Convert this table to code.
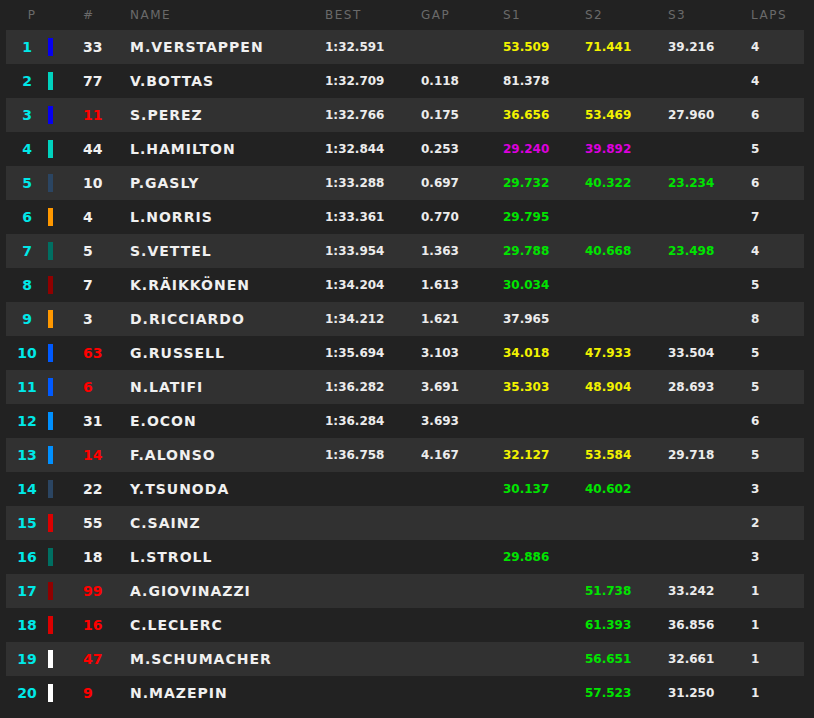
import React from 'react'

type Tone = 'w' | 'y' | 'g' | 'm'

interface Row {
    no: string
    red?: boolean
    name: string
    team: string
    best?: string
    gap?: string
    s1?: [string, Tone]
    s2?: [string, Tone]
    s3?: [string, Tone]
    laps: string
}

const tones: Record<Tone, string> = {
    w: 'text-[#ececec]',
    y: 'text-[#f2f200]',
    g: 'text-[#00e400]',
    m: 'text-[#dc00dc]',
}

const rows: Row[] = [
    { no: '33', name: 'M.VERSTAPPEN', team: 'bg-[#0600ef]', best: '1:32.591', s1: ['53.509', 'y'], s2: ['71.441', 'y'], s3: ['39.216', 'w'], laps: '4' },
    { no: '77', name: 'V.BOTTAS', team: 'bg-[#00d2be]', best: '1:32.709', gap: '0.118', s1: ['81.378', 'w'], laps: '4' },
    { no: '11', red: true, name: 'S.PEREZ', team: 'bg-[#0600ef]', best: '1:32.766', gap: '0.175', s1: ['36.656', 'y'], s2: ['53.469', 'y'], s3: ['27.960', 'w'], laps: '6' },
    { no: '44', name: 'L.HAMILTON', team: 'bg-[#00d2be]', best: '1:32.844', gap: '0.253', s1: ['29.240', 'm'], s2: ['39.892', 'm'], laps: '5' },
    { no: '10', name: 'P.GASLY', team: 'bg-[#2b4562]', best: '1:33.288', gap: '0.697', s1: ['29.732', 'g'], s2: ['40.322', 'g'], s3: ['23.234', 'g'], laps: '6' },
    { no: '4', name: 'L.NORRIS', team: 'bg-[#ff9800]', best: '1:33.361', gap: '0.770', s1: ['29.795', 'g'], laps: '7' },
    { no: '5', name: 'S.VETTEL', team: 'bg-[#006f62]', best: '1:33.954', gap: '1.363', s1: ['29.788', 'g'], s2: ['40.668', 'g'], s3: ['23.498', 'g'], laps: '4' },
    { no: '7', name: 'K.RÄIKKÖNEN', team: 'bg-[#900000]', best: '1:34.204', gap: '1.613', s1: ['30.034', 'g'], laps: '5' },
    { no: '3', name: 'D.RICCIARDO', team: 'bg-[#ff9800]', best: '1:34.212', gap: '1.621', s1: ['37.965', 'w'], laps: '8' },
    { no: '63', red: true, name: 'G.RUSSELL', team: 'bg-[#005aff]', best: '1:35.694', gap: '3.103', s1: ['34.018', 'y'], s2: ['47.933', 'y'], s3: ['33.504', 'w'], laps: '5' },
    { no: '6', red: true, name: 'N.LATIFI', team: 'bg-[#005aff]', best: '1:36.282', gap: '3.691', s1: ['35.303', 'y'], s2: ['48.904', 'y'], s3: ['28.693', 'w'], laps: '5' },
    { no: '31', name: 'E.OCON', team: 'bg-[#0090ff]', best: '1:36.284', gap: '3.693', laps: '6' },
    { no: '14', red: true, name: 'F.ALONSO', team: 'bg-[#0090ff]', best: '1:36.758', gap: '4.167', s1: ['32.127', 'y'], s2: ['53.584', 'y'], s3: ['29.718', 'w'], laps: '5' },
    { no: '22', name: 'Y.TSUNODA', team: 'bg-[#2b4562]', s1: ['30.137', 'g'], s2: ['40.602', 'g'], laps: '3' },
    { no: '55', name: 'C.SAINZ', team: 'bg-[#dc0000]', laps: '2' },
    { no: '18', name: 'L.STROLL', team: 'bg-[#006f62]', s1: ['29.886', 'g'], laps: '3' },
    { no: '99', red: true, name: 'A.GIOVINAZZI', team: 'bg-[#900000]', s2: ['51.738', 'g'], s3: ['33.242', 'w'], laps: '1' },
    { no: '16', red: true, name: 'C.LECLERC', team: 'bg-[#dc0000]', s2: ['61.393', 'g'], s3: ['36.856', 'w'], laps: '1' },
    { no: '47', red: true, name: 'M.SCHUMACHER', team: 'bg-white', s2: ['56.651', 'g'], s3: ['32.661', 'w'], laps: '1' },
    { no: '9', red: true, name: 'N.MAZEPIN', team: 'bg-white', s2: ['57.523', 'g'], s3: ['31.250', 'w'], laps: '1' },
]

const cols = 'grid grid-cols-[42px_35px_47px_195px_96px_82px_82px_83px_83px_1fr] items-center'

const Sector = ({ s }: { s?: [string, Tone] }) => (
    <div className={`text-[12px] font-bold ${s ? tones[s[1]] : ''}`}>{s?.[0]}</div>
)

const App: React.FC = () => {
    return (
        <div className="w-[814px] h-[718px] bg-[#222222] pl-[6px] pr-[10px] font-['DejaVu_Sans',sans-serif] overflow-hidden">
            {/* header */}
            <div className={`${cols} h-[30px] text-[12px] tracking-[1.5px] text-[#6a6a6a]`}>
                <div className="text-center pl-[10px]">P</div>
                <div />
                <div>#</div>
                <div>NAME</div>
                <div>BEST</div>
                <div>GAP</div>
                <div>S1</div>
                <div>S2</div>
                <div>S3</div>
                <div>LAPS</div>
            </div>

            {rows.map((r, i) => (
                <div
                    key={r.name}
                    className={`${cols} h-[34px] ${i % 2 === 0 ? 'bg-[#313131]' : ''}`}
                >
                    <div className="text-center text-[14px] font-bold text-[#00e8e8]">{i + 1}</div>
                    <div>
                        <div className={`w-[5px] h-[18px] ${r.team}`} />
                    </div>
                    <div className={`text-[14px] font-bold ${r.red ? 'text-[#ff0000]' : 'text-[#f0f0f0]'}`}>
                        {r.no}
                    </div>
                    <div className="text-[14px] font-bold tracking-[1px] text-[#f0f0f0]">{r.name}</div>
                    <div className="text-[12px] font-bold text-[#ececec]">{r.best}</div>
                    <div className="text-[12px] font-bold text-[#ececec]">{r.gap}</div>
                    <Sector s={r.s1} />
                    <Sector s={r.s2} />
                    <Sector s={r.s3} />
                    <div className="text-[12px] font-bold text-[#ececec]">{r.laps}</div>
                </div>
            ))}
        </div>
    )
}

export default App
